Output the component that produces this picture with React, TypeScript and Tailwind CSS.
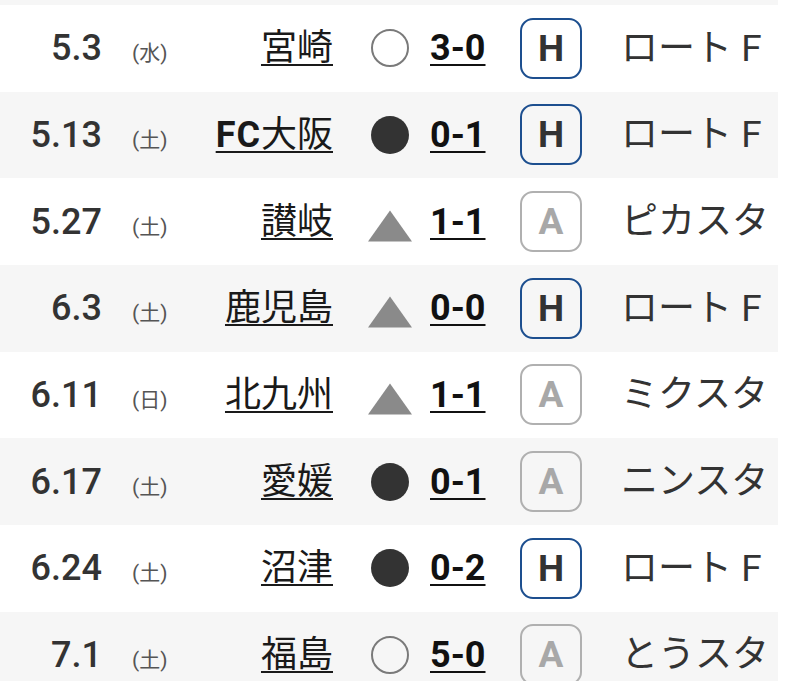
type Result = 'win' | 'loss' | 'draw';

interface Match {
  date: string;
  day: string;
  team: string;
  result: Result;
  score: string;
  home: boolean;
  venue: string;
}

const MATCHES: Match[] = [
  { date: '5.3', day: '水', team: '宮崎', result: 'win', score: '3-0', home: true, venue: 'ロート F' },
  { date: '5.13', day: '土', team: 'FC大阪', result: 'loss', score: '0-1', home: true, venue: 'ロート F' },
  { date: '5.27', day: '土', team: '讃岐', result: 'draw', score: '1-1', home: false, venue: 'ピカスタ' },
  { date: '6.3', day: '土', team: '鹿児島', result: 'draw', score: '0-0', home: true, venue: 'ロート F' },
  { date: '6.11', day: '日', team: '北九州', result: 'draw', score: '1-1', home: false, venue: 'ミクスタ' },
  { date: '6.17', day: '土', team: '愛媛', result: 'loss', score: '0-1', home: false, venue: 'ニンスタ' },
  { date: '6.24', day: '土', team: '沼津', result: 'loss', score: '0-2', home: true, venue: 'ロート F' },
  { date: '7.1', day: '土', team: '福島', result: 'win', score: '5-0', home: false, venue: 'とうスタ' },
];

function ResultMark({ result }: { result: Result }) {
  if (result === 'win') {
    return <div className="w-[38px] h-[38px] rounded-full border-2 border-[#7a7a7a]" />;
  }
  if (result === 'loss') {
    return <div className="w-[38px] h-[38px] rounded-full bg-[#333333]" />;
  }
  return (
    <svg width="48" height="34" viewBox="0 0 48 34" className="mt-[8px]">
      <polygon points="24,0 48,34 0,34" fill="#8a8a8a" />
    </svg>
  );
}

function TeamName({ team }: { team: string }) {
  if (team.startsWith('FC')) {
    return (
      <>
        <span className="font-bold tracking-[1px]">FC</span>
        {team.slice(2)}
      </>
    );
  }
  return <>{team}</>;
}

function MatchRow({ m, shaded }: { m: Match; shaded: boolean }) {
  return (
    <div
      className={`flex items-center h-[86.67px] w-[778px] ${
        shaded ? 'bg-[#f6f6f6]' : 'bg-white'
      }`}
    >
      {/* Date + weekday */}
      <div className="flex items-baseline">
        <span className="w-[102px] text-right text-[36px] leading-none font-medium text-[#333333]">
          {m.date}
        </span>
        <span className="ml-[30px] w-[40px] text-[21px] leading-none text-[#555555] whitespace-nowrap">
          ({m.day})
        </span>
      </div>

      {/* Opponent */}
      <span className="w-[161px] text-right text-[36px] leading-none text-[#1a1a1a] underline underline-offset-[4px] decoration-2 whitespace-nowrap">
        <TeamName team={m.team} />
      </span>

      {/* Result mark */}
      <div className="ml-[35px] w-[44px] flex justify-center">
        <ResultMark result={m.result} />
      </div>

      {/* Score */}
      <span className="ml-[18px] w-[90px] text-[36px] leading-none font-bold text-[#111111] underline underline-offset-[4px] decoration-2">
        {m.score}
      </span>

      {/* Home / Away */}
      <div
        className={`w-[62px] h-[61px] rounded-[13px] border-2 flex items-center justify-center text-[37px] leading-none font-bold ${
          m.home ? 'border-[#1d4f8f] text-[#333333]' : 'border-[#b0b0b0] text-[#a8a8a8]'
        }`}
      >
        {m.home ? 'H' : 'A'}
      </div>

      {/* Venue */}
      <span className="ml-[39px] text-[37px] leading-none text-[#333333] whitespace-nowrap">
        {m.venue}
      </span>
    </div>
  );
}

export default function App() {
  return (
    <div
      className="w-[798px] h-[681px] overflow-hidden bg-white"
      style={{ fontFamily: 'Roboto, "Noto Sans CJK JP", sans-serif' }}
    >
      <div className="h-[5px] w-[778px] bg-[#f6f6f6]" />
      {MATCHES.map((m, i) => (
        <MatchRow key={i} m={m} shaded={i % 2 === 1} />
      ))}
    </div>
  );
}
